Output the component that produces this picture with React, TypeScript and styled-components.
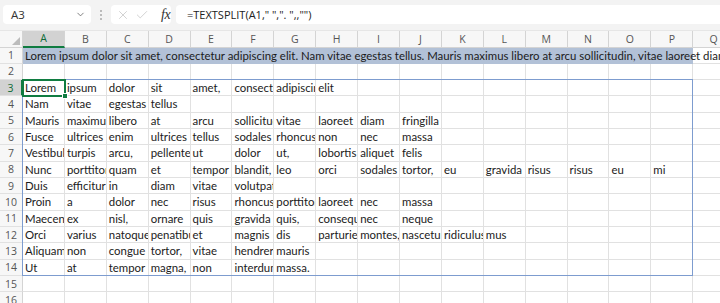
import React from 'react';
import styled, { createGlobalStyle } from 'styled-components';
import { ChevronDown, X, Check } from 'lucide-react';

const GlobalStyle = createGlobalStyle`
  html, body { margin: 0; padding: 0; background: #ffffff; overflow: hidden; }
  #root { width: 720px; height: 303px; overflow: hidden; }
`;

const COL_W = 41.9;
const ROW_H = 16.33;
const CELL_FONT = 11.4;
const LETTERS = 'ABCDEFGHIJKLMNOPQ'.split('');

const ROW1_TEXT =
  'Lorem ipsum dolor sit amet, consectetur adipiscing elit. Nam vitae egestas tellus. Mauris maximus libero at arcu sollicitudin, vitae laoreet diam fringilla. Fusce ultrices enim ultrices tellus sodales rhoncus non nec massa.';

const SPILL: string[] = [
  'Lorem ipsum dolor sit amet, consectetur adipiscing elit',
  'Nam vitae egestas tellus',
  'Mauris maximus libero at arcu sollicitudin, vitae laoreet diam fringilla',
  'Fusce ultrices enim ultrices tellus sodales rhoncus non nec massa',
  'Vestibulum turpis arcu, pellentesque ut dolor ut, lobortis aliquet felis',
  'Nunc porttitor quam et tempor blandit, leo orci sodales tortor, eu gravida risus risus eu mi',
  'Duis efficitur in diam vitae volutpat',
  'Proin a dolor nec risus rhoncus porttitor laoreet nec massa',
  'Maecenas ex nisl, ornare quis gravida quis, consequat nec neque',
  'Orci varius natoque penatibus et magnis dis parturient montes, nascetur ridiculus mus',
  'Aliquam non congue tortor, vitae hendrerit mauris',
  'Ut at tempor magna, non interdum massa.',
];

const Page = styled.div`
  width: 720px;
  height: 303px;
  display: flex;
  flex-direction: column;
  background: #f3f3f3;
  overflow: hidden;
`;

const FormulaBar = styled.div`
  height: 30px;
  flex: none;
  display: flex;
  align-items: flex-start;
  padding: 5px 0 0 3px;
  box-sizing: border-box;
`;

const NameBox = styled.div`
  width: 88px;
  height: 19px;
  box-sizing: border-box;
  background: #ffffff;
  border-radius: 4px;
  display: flex;
  align-items: center;
  justify-content: space-between;
  padding: 0 5px 0 8px;
  font-family: 'Open Sans', sans-serif;
  font-size: 11.5px;
  color: #333;
`;

const Chevron = styled(ChevronDown)`
  color: #555;
`;

const Dots = styled.div`
  width: 20px;
  height: 19px;
  display: flex;
  flex-direction: column;
  align-items: center;
  justify-content: center;
  gap: 2px;
`;

const Dot = styled.span`
  width: 2px;
  height: 2px;
  border-radius: 1px;
  background: #a8a8a8;
`;

const FxBox = styled.div`
  width: 60px;
  height: 19px;
  box-sizing: border-box;
  background: #ffffff;
  border-radius: 4px;
  display: flex;
  align-items: center;
  padding: 0 0 0 5px;
  gap: 5px;
  color: #b8b8b8;
`;

const Fx = styled.span`
  font-family: 'Liberation Serif', serif;
  font-style: italic;
  font-size: 14px;
  color: #333;
  margin-left: 7px;
  letter-spacing: -0.5px;
  line-height: 1;
`;

const FormulaInput = styled.div`
  flex: 1;
  margin-left: 5px;
  height: 19px;
  background: #ffffff;
  border-radius: 4px 0 0 4px;
  display: flex;
  align-items: center;
  padding-left: 11px;
  font-family: 'Open Sans', sans-serif;
  font-size: 11px;
  color: #222;
  white-space: pre;
`;

const Sheet = styled.div`
  display: grid;
  grid-template-columns: 23px repeat(17, ${COL_W}px);
  grid-template-rows: 16.5px repeat(16, ${ROW_H}px);
  background: #ffffff;
  flex: none;
  border-top: 1px solid #e6e6e6;
`;

type Pos = { $r: number; $c: number };

const Corner = styled.div<Pos>`
  grid-row: ${(p) => p.$r};
  grid-column: ${(p) => p.$c};
  background: #f7f7f7;
  border-right: 1px solid #d4d4d4;
  border-bottom: 1px solid #d4d4d4;
  position: relative;
  &::after {
    content: '';
    position: absolute;
    right: 2px;
    bottom: 2px;
    border-left: 8px solid transparent;
    border-bottom: 8px solid #bcbcbc;
  }
`;

const ColHead = styled.div<Pos & { $sel?: boolean }>`
  grid-row: ${(p) => p.$r};
  grid-column: ${(p) => p.$c};
  box-sizing: border-box;
  background: ${(p) => (p.$sel ? '#d2d2d2' : '#f7f7f7')};
  border-right: 1px solid #d4d4d4;
  border-bottom: ${(p) => (p.$sel ? '2px solid #107c41' : '1px solid #d4d4d4')};
  display: flex;
  align-items: center;
  justify-content: center;
  font-family: 'Open Sans', sans-serif;
  font-size: 10.5px;
  color: ${(p) => (p.$sel ? '#0e6b38' : '#555')};
`;

const RowHead = styled.div<Pos & { $sel?: boolean }>`
  grid-row: ${(p) => p.$r};
  grid-column: ${(p) => p.$c};
  box-sizing: border-box;
  background: ${(p) => (p.$sel ? '#d2d2d2' : '#f7f7f7')};
  border-right: ${(p) => (p.$sel ? '2px solid #107c41' : '1px solid #d4d4d4')};
  border-bottom: 1px solid #e1e1e1;
  display: flex;
  align-items: center;
  justify-content: center;
  font-family: 'Open Sans', sans-serif;
  font-size: 10.5px;
  color: ${(p) => (p.$sel ? '#0e6b38' : '#555')};
`;

const Cell = styled.div<Pos>`
  grid-row: ${(p) => p.$r};
  grid-column: ${(p) => p.$c};
  box-sizing: border-box;
  border-right: 1px solid #e1e1e1;
  border-bottom: 1px solid #e1e1e1;
  overflow: hidden;
  white-space: nowrap;
  padding-left: 2px;
  font-family: Lato, sans-serif;
  font-size: ${CELL_FONT}px;
  line-height: ${ROW_H}px;
  color: #1b1b1b;
`;

const FilledSpan = styled.div<{ $r: number; $from: number; $to: number }>`
  grid-row: ${(p) => p.$r};
  grid-column: ${(p) => p.$from} / ${(p) => p.$to};
  background: #b2c1d7;
  white-space: nowrap;
  overflow: visible;
  padding-left: 2px;
  font-family: Lato, sans-serif;
  font-size: ${CELL_FONT}px;
  line-height: ${ROW_H}px;
  color: #1b1b1b;
  z-index: 1;
`;

const SpillBorder = styled.div<{ $rows: string; $cols: string }>`
  grid-row: ${(p) => p.$rows};
  grid-column: ${(p) => p.$cols};
  border: 1px solid #7d9ccf;
  margin: -1px 0 0 -1px;
  pointer-events: none;
  z-index: 2;
`;

const Selection = styled.div<Pos>`
  grid-row: ${(p) => p.$r};
  grid-column: ${(p) => p.$c};
  border: 2px solid #107c41;
  margin: -1px;
  position: relative;
  pointer-events: none;
  z-index: 3;
  &::after {
    content: '';
    position: absolute;
    right: -4px;
    bottom: -4px;
    width: 4px;
    height: 4px;
    background: #107c41;
    border: 1px solid #ffffff;
  }
`;

export default function App() {
  const cells: React.ReactNode[] = [];
  for (let r = 1; r <= 16; r++) {
    const gr = r + 1;
    cells.push(
      <RowHead key={`rh${r}`} $r={gr} $c={1} $sel={r === 3}>
        {r}
      </RowHead>
    );
    if (r === 1) {
      cells.push(
        <FilledSpan key="fill" $r={gr} $from={2} $to={18}>
          {ROW1_TEXT}
        </FilledSpan>
      );
      cells.push(<Cell key="q1" $r={gr} $c={18} />);
      continue;
    }
    const words = r >= 3 && r <= 14 ? SPILL[r - 3].split(' ') : [];
    for (let c = 0; c < LETTERS.length; c++) {
      cells.push(
        <Cell key={`c${r}-${c}`} $r={gr} $c={c + 2}>
          {words[c] ?? ''}
        </Cell>
      );
    }
  }

  return (
    <>
      <GlobalStyle />
      <Page>
        <FormulaBar>
          <NameBox>
            A3
            <Chevron size={11} strokeWidth={1.6} />
          </NameBox>
          <Dots>
            <Dot />
            <Dot />
            <Dot />
          </Dots>
          <FxBox>
            <X size={14} strokeWidth={1.1} />
            <Check size={14} strokeWidth={1.1} />
            <Fx>fx</Fx>
          </FxBox>
          <FormulaInput>{'=TEXTSPLIT(A1," ",". ",,"")'}</FormulaInput>
        </FormulaBar>
        <Sheet>
          <Corner $r={1} $c={1} />
          {LETTERS.map((l, i) => (
            <ColHead key={l} $r={1} $c={i + 2} $sel={l === 'A'}>
              {l}
            </ColHead>
          ))}
          {cells}
          <SpillBorder $rows="4 / 16" $cols="2 / 18" />
          <Selection $r={4} $c={2} />
        </Sheet>
      </Page>
    </>
  );
}
